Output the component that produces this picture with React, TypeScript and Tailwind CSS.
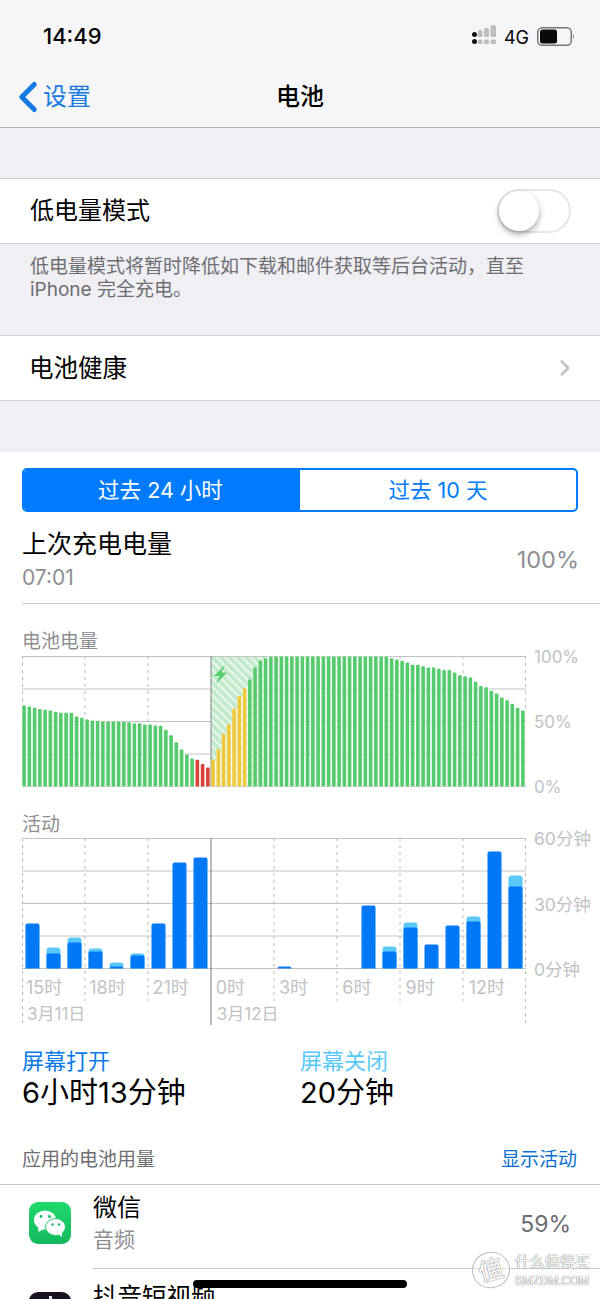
import React from 'react';
import { ChevronLeft, ChevronRight } from 'lucide-react';

// battery level per 15 minutes, percent
const levels = [
  62.3, 61.5, 60.5, 59.7, 59, 58.5, 57.5, 56.7, 56.7, 56.7, 53.8, 52.8, 51.5, 50.8, 50.5, 50, 50, 50, 50, 50, 49.5,
  48.7, 48.7, 47.7, 47.7, 47, 46.7, 43.6, 39.5, 34, 28.5, 24.6, 21.5, 20.5, 17.4, 14.6, 20.5, 28.7, 40.5, 47.7, 60,
  69.7, 75.6, 82.5, 91.8, 97, 98.7, 100, 100, 100, 100, 100, 100, 100, 100, 100, 100, 100, 100, 100, 100, 100, 100,
  100, 100, 100, 100, 100, 100, 100, 98.7, 97.7, 96.7, 95.4, 93.6, 93.6, 92.5, 91.5, 91.5, 90.5, 89.7, 89.7, 87.7,
  85.6, 84.9, 83.8, 80.5, 77.4, 76.4, 73.6, 71.5, 68.5, 66.4, 63.6, 60.5, 58.5,
];

// activity bars in px: [screen on, screen on + off]
const activity: [number, number][] = [
  [45, 45], [15, 21], [26, 31], [17, 20], [2, 6], [13, 15], [45, 45], [106, 106], [111, 111], [0, 0], [0, 0], [0, 0],
  [2, 2], [0, 0], [0, 0], [0, 0], [63, 63], [17, 22], [41, 46], [24, 24], [43, 43], [47, 52], [117, 117], [82, 93],
];

const vLines = [0.5, 63, 126, 252, 315, 378, 441, 503.5];

const batteryColor = (i: number) => {
  if (i >= 33 && i <= 35) return '#d9403a';
  if (i >= 36 && i <= 42) return '#efc93a';
  return '#54cb6c';
};

const BatteryChart = () => (
  <svg width="506" height="131" className="block">
    <defs>
      <pattern id="hatch" width="6" height="6" patternUnits="userSpaceOnUse" patternTransform="rotate(-45)">
        <rect width="6" height="6" fill="#e6f7ea" />
        <rect width="3.5" height="6" fill="#bfe9c9" />
      </pattern>
    </defs>
    {[0.5, 33, 65.5, 98, 130.5].map((y) => (
      <line key={y} x1="0" x2="504" y1={y} y2={y} stroke="#c4c4c4" />
    ))}
    {vLines.map((x) => (
      <line key={x} x1={x} x2={x} y1="0" y2="130" stroke="#b9b9b9" strokeDasharray="3 4" />
    ))}
    <rect x="189" y="1" width="56" height="129" fill="url(#hatch)" />
    {/* pale fill between the bars */}
    {levels.map((v, i) => {
      const h = (v / 100) * 130;
      return <rect key={i} x={i * 5.25} y={130.5 - h} width="5.25" height={h} fill="#ffffff" fillOpacity="0.6" />;
    })}
    <line x1="189" x2="189" y1="0" y2="130" stroke="#7d8a80" />
    {levels.map((v, i) => {
      const h = (v / 100) * 130;
      return <rect key={i} x={0.3 + i * 5.25} y={130.5 - h} width="3.6" height={h} rx="1" fill={batteryColor(i)} />;
    })}
    <path d="M203 9 L192 20 L197.5 20 L194 28 L205 16.5 L199.5 16.5 Z" fill="#54cb6c" />
  </svg>
);

const ActivityChart = () => (
  <svg width="506" height="187" className="block">
    {[0.5, 33, 65.5, 98, 130.5].map((y) => (
      <line key={y} x1="0" x2="504" y1={y} y2={y} stroke="#c4c4c4" />
    ))}
    {vLines.map((x, i) => (
      <line key={x} x1={x} x2={x} y1="0" y2={i === 0 || i === 7 ? 187 : 163} stroke="#b9b9b9" strokeDasharray="3 4" />
    ))}
    <line x1="189" x2="189" y1="0" y2="187" stroke="#77777b" />
    {activity.map(([on, all], i) =>
      all > 0 ? (
        <g key={i}>
          {all > on && <rect x={3.5 + i * 21} y={130.5 - all} width="14" height={all} rx="3" fill="#5ac8fa" />}
          <path
            d={`M${3.5 + i * 21} 130.5 v${-on + 2} q0 -2 2 -2 h10 q2 0 2 2 v${on - 2} z`}
            fill="#0077f5"
          />
        </g>
      ) : null,
    )}
  </svg>
);

const WeChatIcon = () => (
  <svg width="42" height="42" viewBox="0 0 42 42">
    <defs>
      <linearGradient id="wx" x1="0" y1="0" x2="0" y2="1">
        <stop offset="0" stopColor="#20d96c" />
        <stop offset="1" stopColor="#12b95c" />
      </linearGradient>
    </defs>
    <rect width="42" height="42" rx="9" fill="url(#wx)" />
    <ellipse cx="16" cy="18" rx="11" ry="9.5" fill="#ffffff" />
    <path d="M9 25 L9.5 30 L15 27 Z" fill="#ffffff" />
    <circle cx="12" cy="14.5" r="1.4" fill="#15b85e" />
    <circle cx="20.5" cy="14.5" r="1.4" fill="#15b85e" />
    <ellipse cx="26.5" cy="25" rx="10" ry="8.5" fill="#ffffff" stroke="#1ccb68" strokeWidth="1" />
    <path d="M29 32 L33 35 L33 29 Z" fill="#ffffff" />
    <circle cx="23.5" cy="22.5" r="1.2" fill="#15b85e" />
    <circle cx="30" cy="22.5" r="1.2" fill="#15b85e" />
  </svg>
);

const SignalIcon = () => (
  <svg width="25" height="19" viewBox="0 0 25 19">
    <rect x="0" y="7" width="5" height="5" rx="2.5" fill="#111" />
    <rect x="0" y="14" width="5" height="5" rx="2.5" fill="#111" />
    <rect x="6" y="5" width="4.5" height="7" rx="1.5" fill="#bdbdbf" />
    <rect x="12" y="3" width="5" height="9" rx="1.5" fill="#bdbdbf" />
    <rect x="18.5" y="0" width="5.5" height="12" rx="1.5" fill="#bdbdbf" />
    <rect x="6" y="14.5" width="4.5" height="4.5" rx="1.5" fill="#bdbdbf" />
    <rect x="12" y="14.5" width="5" height="4.5" rx="1.5" fill="#bdbdbf" />
    <rect x="18.5" y="14.5" width="5.5" height="4.5" rx="1.5" fill="#bdbdbf" />
  </svg>
);

const BatteryIcon = () => (
  <svg width="38" height="19" viewBox="0 0 38 19">
    <rect x="0.75" y="0.75" width="33.5" height="17.5" rx="4.5" fill="none" stroke="#77777a" strokeWidth="1.5" />
    <rect x="3" y="2.5" width="17" height="14" rx="2.5" fill="#0a0a0a" />
    <path d="M36 7 q2 2.5 0 5 z" fill="#77777a" />
  </svg>
);

const App: React.FC = () => {
  return (
    <div className="relative h-[1299px] w-[600px] overflow-hidden bg-white font-['Inter','Noto_Sans_CJK_SC',sans-serif] text-black">
      <header className="h-[128px] border-b border-[#b4b4b6] bg-[#f6f6f8]">
        <div className="flex h-[72px] items-center pl-[43px] pr-[25px]">
          <span className="text-[22px] font-medium">14:49</span>
          <div className="ml-auto flex items-center">
            <span className="-mt-[3px]">
              <SignalIcon />
            </span>
            <span className="ml-[7px] mt-[2px] text-[18px]">4G</span>
            <span className="ml-[8px]">
              <BatteryIcon />
            </span>
          </div>
        </div>
        <div className="grid h-[48px] grid-cols-3 items-center">
          <div className="flex items-center text-[#1479e0]">
            <ChevronLeft size={50} strokeWidth={2.4} className="-mr-[10px] ml-[3px] shrink-0" />
            <span className="text-[24px]">设置</span>
          </div>
          <div className="text-center text-[24px] font-medium">电池</div>
        </div>
      </header>

      <div className="h-[50px] bg-[#efeff4]" />

      <div className="flex h-[66px] items-center justify-between border-y border-[#cfcfd2] pl-[30px] pr-[29px]">
        <span className="text-[24px]">低电量模式</span>
        <div className="h-[44px] w-[74px] rounded-full border-2 border-[#e5e5ea] bg-white">
          <div className="h-[40px] w-[40px] rounded-full bg-white shadow-[0_3px_6px_rgba(0,0,0,0.35)]" />
        </div>
      </div>

      <div className="h-[91px] bg-[#efeff4] px-[30px] pt-[11px] text-[19px] leading-[23px] text-[#6d6d72]">
        低电量模式将暂时降低如下载和邮件获取等后台活动，直至
        <br />
        iPhone 完全充电。
      </div>

      <div className="flex h-[66px] items-center justify-between border-y border-[#cfcfd2] pl-[29px] pr-[22px]">
        <span className="text-[24.5px]">电池健康</span>
        <ChevronRight size={26} strokeWidth={2.4} className="text-[#c4c4c8]" />
      </div>

      <div className="h-[51px] bg-[#efeff4]" />

      <div className="bg-white pt-[16px]">
        <div className="mx-[22px] flex h-[44px] overflow-hidden rounded-[5px] border-2 border-[#007aff] text-[21.5px]">
          <div className="flex w-[276px] items-center justify-center bg-[#007aff] pr-[3px] text-white">过去 24 小时</div>
          <div className="flex flex-1 items-center justify-center text-[#007aff]">过去 10 天</div>
        </div>

        <div className="ml-[22px] flex h-[92px] items-start justify-between border-b border-[#c8c8cb] pr-[21px] pt-[16px]">
          <div>
            <div className="text-[25px] leading-[32px]">上次充电电量</div>
            <div className="mt-[6px] text-[21px] leading-[24px] text-[#8e8e93]">07:01</div>
          </div>
          <div className="mt-[16px] text-[23.5px] leading-[32px] text-[#8e8e93]">100%</div>
        </div>

        <div className="ml-[22px] mt-[26px] text-[19px] leading-[24px] text-[#8e8e93]">电池电量</div>
        <div className="ml-[22px] mt-[2px] flex h-[131px] items-start">
          <BatteryChart />
          <div className="-mt-[9px] ml-[6px] flex h-[150px] flex-col justify-between text-[17px] leading-[20px] text-[#c2c2c6]">
            <span>100%</span>
            <span>50%</span>
            <span>0%</span>
          </div>
        </div>

        <div className="ml-[22px] mt-[26px] text-[19px] leading-[24px] text-[#8e8e93]">活动</div>
        <div className="ml-[22px] mt-[1px] flex items-start">
          <div className="relative">
            <ActivityChart />
            <div className="absolute left-0 top-[138px] w-[506px] text-[18px] leading-[24px] text-[#c2c2c6]">
              <div className="grid grid-cols-8">
                {['15时', '18时', '21时', '0时', '3时', '6时', '9时', '12时'].map((t) => (
                  <span key={t} className="pl-[4px]">
                    {t}
                  </span>
                ))}
              </div>
              <div className="mt-[2px] grid grid-cols-8 text-[17px]">
                <span className="col-span-3 pl-[5px]">3月11日</span>
                <span className="col-span-5 pl-[5px]">3月12日</span>
              </div>
            </div>
          </div>
          <div className="-mt-[9px] ml-[6px] flex h-[151px] flex-col justify-between text-[17.5px] leading-[20px] text-[#c2c2c6]">
            <span>60分钟</span>
            <span>30分钟</span>
            <span>0分钟</span>
          </div>
        </div>

        <div className="ml-[22px] mt-[21px] grid grid-cols-[278px_1fr]">
          <div>
            <div className="text-[22px] leading-[30px] text-[#0a7ae8]">屏幕打开</div>
            <div className="-mt-[1px] text-[29px] leading-[36px]">6小时13分钟</div>
          </div>
          <div>
            <div className="text-[22px] leading-[30px] text-[#5ac8fa]">屏幕关闭</div>
            <div className="-mt-[1px] text-[29px] leading-[36px]">20分钟</div>
          </div>
        </div>

        <div className="mt-[23px] flex h-[51px] items-center justify-between border-b border-[#c8c8cb] pl-[22px] pr-[23px] pt-[2px] text-[19px]">
          <span className="text-[#6d6d72]">应用的电池用量</span>
          <span className="text-[#0a6fd0]">显示活动</span>
        </div>

        <div className="flex h-[84px] items-center pl-[29px]">
          <div className="-mt-[9px]">
            <WeChatIcon />
          </div>
          <div className="ml-[22px] flex h-full flex-1 items-center justify-between border-b border-[#c8c8cb] pb-[9px] pr-[29px]">
            <div>
              <div className="text-[24px] leading-[36px]">微信</div>
              <div className="text-[21px] leading-[28px] text-[#8e8e93]">音频</div>
            </div>
            <span className="mt-[4px] text-[23px] text-[#6d6d72]">59%</span>
          </div>
        </div>

        <div className="flex items-start pl-[29px]">
          <div className="mt-[23px] flex h-[42px] w-[42px] justify-center rounded-[9px] bg-[#1a1024] pt-[4px]">
            <div className="h-[6px] w-[3px] bg-[#e8e8ee]" />
          </div>
          <div className="ml-[22px] mt-[10px] text-[24.5px] leading-[36px]">抖音短视频</div>
        </div>
      </div>

      <div className="absolute left-[193px] top-[1280px] h-[8px] w-[214px] rounded-full bg-black" />

      <div className="absolute left-[472px] top-[1252px] flex items-start text-white [text-shadow:0_0_1px_#77777b,0_0_1px_#77777b]">
        <div className="flex h-[36px] w-[38px] rotate-[-15deg] items-center justify-center rounded-full border border-[#bdbdc1] bg-white/40 text-[25px] leading-none">
          值
        </div>
        <div className="ml-[5px] w-[76px]">
          <div className="text-[15px] leading-[19px]">什么值得买</div>
          <div className="mt-[4px] text-[11.5px] leading-[13px]">SMZDM.COM</div>
        </div>
      </div>
    </div>
  );
};

export default App;
